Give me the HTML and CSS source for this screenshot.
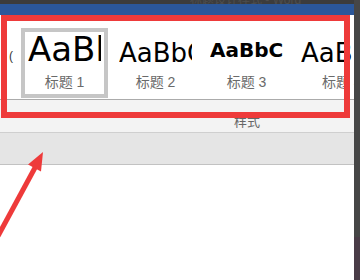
FILE: index.html
```html
<!DOCTYPE html>
<html>
	<head>
		<meta charset="UTF-8">
		<title>样式</title>
		<link rel="stylesheet" href="styles.css">
	</head>
	<body>
		<div class="app">
			<div class="main">
				<div class="titlebar"><span>标题设计样式 - Word</span></div>
				<div class="tabbar"></div>
				<div class="gallery">
					<span class="scroll-left">(</span>
					<div class="style-item selected">
						<div class="sample h1">AaBbCc</div>
						<div class="label">标题 1</div>
					</div>
					<div class="style-item">
						<div class="sample h2">AaBbCc</div>
						<div class="label">标题 2</div>
					</div>
					<div class="style-item">
						<div class="sample h3">AaBbCc</div>
						<div class="label">标题 3</div>
					</div>
					<div class="style-item">
						<div class="sample h4">AaBbCc</div>
						<div class="label">标题 4</div>
					</div>
				</div>
				<div class="group-footer">样式</div>
				<div class="ruler"></div>
				<div class="doc"></div>
			</div>
			<div class="edge">
				<div class="edge-top"></div>
				<div class="edge-bottom"></div>
			</div>
		</div>

		<!-- annotation drawn over the screenshot -->
		<div class="highlight"></div>
		<svg class="arrow" width="60" height="100" viewBox="0 140 60 100">
			<line x1="-2" y1="236" x2="37" y2="164" stroke="#ee3a3a" stroke-width="5"/>
			<polygon points="43,152 28,164.5 41,171.5" fill="#ee3a3a"/>
		</svg>
	</body>
</html>
```

FILE: styles.css
```css
html {
	background-color: #FFFFFF;
}
body {
	margin: 0;
	width: 360px;
	height: 280px;
	position: relative;
	overflow: hidden;
	font-family: "Liberation Sans", "Noto Sans CJK SC", sans-serif;
}
.app {
	display: flex;
	height: 280px;
}
.main {
	flex: 1;
	min-width: 0;
	display: flex;
	flex-direction: column;
	background-color: #F3F3F3;
}
.titlebar {
	height: 4px;
	overflow: hidden;
	background-color: #3C3C3C;
	color: #4E4E4E;
	font-size: 12px;
	line-height: 0px;
	padding-left: 190px;
	white-space: nowrap;
}
.tabbar {
	height: 11px;
	background-color: #2B579A;
}
.gallery {
	height: 85px;
	display: flex;
	gap: 4px;
	padding: 13px 0 0 21px;
	box-sizing: border-box;
	background-color: #FFFFFF;
	border-bottom: 1px solid #ABABAB;
	overflow: hidden;
	position: relative;
}
.scroll-left {
	position: absolute;
	left: 9px;
	top: 34px;
	font-size: 12px;
	color: #333333;
}
.style-item {
	flex: 0 0 87px;
	height: 70px;
	box-sizing: border-box;
	border: 4px solid transparent;
	padding: 0 3px;
	overflow: hidden;
}
.style-item.selected {
	border-color: #C6C6C6;
}
.sample {
	height: 34px;
	overflow: hidden;
	white-space: nowrap;
	color: #000000;
	font-family: "DejaVu Sans", sans-serif;
}
.sample.h1 {
	font-size: 34px;
	line-height: 34px;
}
.sample.h2, .sample.h4 {
	font-size: 26px;
	line-height: 42px;
	height: 42px;
	margin-bottom: -8px;
}
.sample.h3 {
	font-size: 20px;
	font-weight: bold;
	line-height: 36px;
}
.label {
	margin-top: 6px;
	text-align: center;
	white-space: nowrap;
	font-size: 14px;
	line-height: 20px;
	color: #6A6A6A;
}
.style-item:last-child .label {
	text-align: left;
	padding-left: 21px;
}
.group-footer {
	height: 32px;
	box-sizing: border-box;
	padding: 14px 0 0 234px;
	font-size: 13px;
	line-height: 16px;
	color: #666666;
}
.ruler {
	height: 33px;
	box-sizing: border-box;
	background-color: #E5E5E5;
	border-top: 1px solid #CFCFCF;
	border-bottom: 1px solid #C2C2C2;
}
.doc {
	flex: 1;
	background-color: #FFFFFF;
}
.edge {
	width: 6px;
	display: flex;
	flex-direction: column;
}
.edge-top {
	height: 237px;
	background-color: #464646;
}
.edge-bottom {
	flex: 1;
	background-color: #4A3C47;
}
.highlight {
	position: absolute;
	left: 1px;
	top: 15px;
	width: 349px;
	height: 103px;
	box-sizing: border-box;
	border: 6px solid #EE3A3A;
}
.arrow {
	position: absolute;
	left: 0;
	top: 140px;
}
```
